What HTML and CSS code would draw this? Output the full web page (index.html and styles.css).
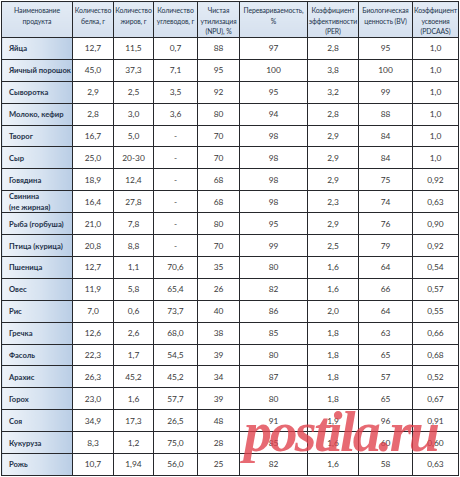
FILE: index.html
```html
<!DOCTYPE html>
<html lang="ru">
<head>
<meta charset="utf-8">
<title>Пищевая ценность белка</title>
<link rel="stylesheet" href="styles.css">
</head>
<body>
<div class="page">
<table class="grid">
<colgroup>
<col class="c1"><col class="c2"><col class="c3"><col class="c4"><col class="c5"><col class="c6"><col class="c7"><col class="c8"><col class="c9">
</colgroup>
<thead>
<tr class="head">
<th>Наименование<br>продукта</th>
<th>Количество<br>белка, г</th>
<th>Количество<br>жиров, г</th>
<th>Количество<br>углеводов, г</th>
<th>Чистая<br>утилизация<br>(NPU), %</th>
<th>Перевариваемость,<br>%</th>
<th>Коэффициент<br>эффективности<br>(PER)</th>
<th>Биологическая<br>ценность (BV)</th>
<th>Коэффициент<br>усвоения<br>(PDCAAS)</th>
</tr>
</thead>
<tbody>
<tr><td class="name">Яйца</td><td>12,7</td><td>11,5</td><td>0,7</td><td>88</td><td>97</td><td>2,8</td><td>95</td><td>1,0</td></tr>
<tr><td class="name">Яичный порошок</td><td>45,0</td><td>37,3</td><td>7,1</td><td>95</td><td>100</td><td>3,8</td><td>100</td><td>1,0</td></tr>
<tr><td class="name">Сыворотка</td><td>2,9</td><td>2,5</td><td>3,5</td><td>92</td><td>95</td><td>3,2</td><td>99</td><td>1,0</td></tr>
<tr><td class="name">Молоко, кефир</td><td>2,8</td><td>3,0</td><td>3,6</td><td>80</td><td>94</td><td>2,8</td><td>88</td><td>1,0</td></tr>
<tr><td class="name">Творог</td><td>16,7</td><td>5,0</td><td>-</td><td>70</td><td>98</td><td>2,9</td><td>84</td><td>1,0</td></tr>
<tr><td class="name">Сыр</td><td>25,0</td><td>20-30</td><td>-</td><td>70</td><td>98</td><td>2,9</td><td>84</td><td>1,0</td></tr>
<tr><td class="name">Говядина</td><td>18,9</td><td>12,4</td><td>-</td><td>68</td><td>98</td><td>2,9</td><td>75</td><td>0,92</td></tr>
<tr><td class="name two">Свинина<br>(не жирная)</td><td>16,4</td><td>27,8</td><td>-</td><td>68</td><td>98</td><td>2,3</td><td>74</td><td>0,63</td></tr>
<tr><td class="name">Рыба (горбуша)</td><td>21,0</td><td>7,8</td><td>-</td><td>80</td><td>95</td><td>2,9</td><td>76</td><td>0,90</td></tr>
<tr><td class="name">Птица (курица)</td><td>20,8</td><td>8,8</td><td>-</td><td>70</td><td>99</td><td>2,5</td><td>79</td><td>0,92</td></tr>
<tr><td class="name">Пшеница</td><td>12,7</td><td>1,1</td><td>70,6</td><td>35</td><td>80</td><td>1,6</td><td>64</td><td>0,54</td></tr>
<tr><td class="name">Овес</td><td>11,9</td><td>5,8</td><td>65,4</td><td>26</td><td>82</td><td>1,6</td><td>66</td><td>0,57</td></tr>
<tr><td class="name">Рис</td><td>7,0</td><td>0,6</td><td>73,7</td><td>40</td><td>86</td><td>2,0</td><td>64</td><td>0,55</td></tr>
<tr><td class="name">Гречка</td><td>12,6</td><td>2,6</td><td>68,0</td><td>38</td><td>85</td><td>1,8</td><td>63</td><td>0,66</td></tr>
<tr><td class="name">Фасоль</td><td>22,3</td><td>1,7</td><td>54,5</td><td>39</td><td>80</td><td>1,8</td><td>65</td><td>0,68</td></tr>
<tr><td class="name">Арахис</td><td>26,3</td><td>45,2</td><td>45,2</td><td>34</td><td>87</td><td>1,8</td><td>57</td><td>0,52</td></tr>
<tr><td class="name">Горох</td><td>23,0</td><td>1,6</td><td>57,7</td><td>39</td><td>80</td><td>1,8</td><td>65</td><td>0,67</td></tr>
<tr><td class="name">Соя</td><td>34,9</td><td>17,3</td><td>26,5</td><td>48</td><td>91</td><td>1,9</td><td>96</td><td>0,91</td></tr>
<tr><td class="name">Кукуруза</td><td>8,3</td><td>1,2</td><td>75,0</td><td>28</td><td>85</td><td>1,6</td><td>60</td><td>0,60</td></tr>
<tr><td class="name">Рожь</td><td>10,7</td><td>1,94</td><td>56,0</td><td>25</td><td>82</td><td>1,6</td><td>58</td><td>0,63</td></tr>
</tbody>
</table>
<div class="watermark">postila.ru</div>
</div>
</body>
</html>
```

FILE: styles.css
```css
html, body {
  margin: 0;
  padding: 0;
  background: #ffffff;
}

.page {
  position: relative;
  width: 460px;
  height: 477px;
  overflow: hidden;
  padding: 1px 0 0 1px;
  box-sizing: border-box;
}

.grid {
  border-collapse: collapse;
  table-layout: fixed;
  width: 457px;
  font-family: Lato, "Liberation Sans", sans-serif;
}

.c1 { width: 71px; }
.c2 { width: 41px; }
.c3 { width: 40px; }
.c4 { width: 44px; }
.c5 { width: 42px; }
.c6 { width: 68px; }
.c7 { width: 51px; }
.c8 { width: 54px; }
.c9 { width: 46px; }

.grid th,
.grid td {
  border: 1px solid #26282c;
  padding: 0;
}

.head {
  height: 36px;
}

.grid th {
  background: linear-gradient(180deg, #e3ebf5 0%, #d5e0ee 100%);
  color: #24354d;
  font-size: 6.9px;
  font-weight: 400;
  letter-spacing: -0.1px;
  line-height: 10.5px;
  vertical-align: top;
  padding-top: 3px;
  text-align: center;
  white-space: nowrap;
  overflow: hidden;
}

.grid tbody tr {
  height: 21.9px;
}

.grid td {
  text-align: center;
  vertical-align: middle;
  font-size: 8.4px;
  color: #3a3a3a;
  line-height: 10px;
  background: #ffffff;
}

.grid td.name {
  text-align: left;
  padding-left: 7px;
  font-weight: 700;
  font-size: 7.6px;
  color: #24324a;
  white-space: nowrap;
  background: linear-gradient(90deg, #eef3f9 0%, #d6e2f0 55%, #b9cde5 100%);
}

.grid td.two {
  line-height: 10.5px;
}

.watermark {
  position: absolute;
  left: 244px;
  top: 404px;
  font-family: "Liberation Serif", serif;
  font-style: italic;
  font-weight: 700;
  font-size: 56px;
  line-height: 56px;
  letter-spacing: -2.6px;
  color: rgba(224, 64, 76, 0.78);
  white-space: nowrap;
  pointer-events: none;
}
```
